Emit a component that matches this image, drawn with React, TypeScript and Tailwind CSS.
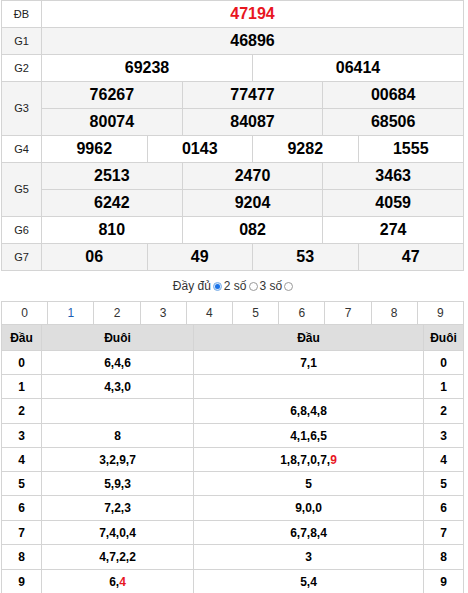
import React from "react";

type Cell = { text: string; span: string; red?: boolean };

const RED = "text-[#e8161f]";

function Label({ text, rows }: { text: string; rows?: number }) {
  return (
    <div
      className={`flex items-center justify-center border-r border-b border-[#d4d4d4] text-[11px] text-[#222] ${rows === 2 ? "row-span-2" : ""}`}
    >
      {text}
    </div>
  );
}

function Val({ c, bg }: { c: Cell; bg: string }) {
  return (
    <div
      className={`flex items-center justify-center border-r border-b border-[#d4d4d4] text-[16px] font-bold ${bg} ${c.span} ${c.red ? RED : "text-black"}`}
    >
      {c.text}
    </div>
  );
}

function Radio({ on }: { on?: boolean }) {
  return on ? (
    <span className="mx-[2px] inline-flex h-[9px] w-[9px] items-center justify-center rounded-full border border-[#7aaee8] bg-[#cfe3fa]">
      <span className="h-[5px] w-[5px] rounded-full bg-[#1a73e8]" />
    </span>
  ) : (
    <span className="mx-[2px] inline-block h-[9px] w-[9px] rounded-full border border-[#9a9a9a] bg-white" />
  );
}

const rows = [
  { d: "0", t: [["6,4,6"]], h: [["7,1"]], hgt: "h-[24px]" },
  { d: "1", t: [["4,3,0"]], h: [[""]], hgt: "h-[24px]" },
  { d: "2", t: [[""]], h: [["6,8,4,8"]], hgt: "h-[25px]" },
  { d: "3", t: [["8"]], h: [["4,1,6,5"]], hgt: "h-[24px]" },
  { d: "4", t: [["3,2,9,7"]], h: [["1,8,7,0,7,"], ["9", "r"]], hgt: "h-[24px]" },
  { d: "5", t: [["5,9,3"]], h: [["5"]], hgt: "h-[24px]" },
  { d: "6", t: [["7,2,3"]], h: [["9,0,0"]], hgt: "h-[25px]" },
  { d: "7", t: [["7,4,0,4"]], h: [["6,7,8,4"]], hgt: "h-[24px]" },
  { d: "8", t: [["4,7,2,2"]], h: [["3"]], hgt: "h-[25px]" },
  { d: "9", t: [["6,"], ["4", "r"]], h: [["5,4"]], hgt: "h-[24px]" },
];

function Parts({ p }: { p: string[][] }) {
  return (
    <>
      {p.map((x, i) => (
        <span key={i} className={x[1] === "r" ? RED : ""}>
          {x[0]}
        </span>
      ))}
    </>
  );
}

export default function App() {
  const W = "bg-white";
  const G = "bg-[#f4f4f4]";
  return (
    <div className="min-h-[593px] w-[468px] bg-white font-['Liberation_Sans',Arial,sans-serif]">
      {/* prize table */}
      <div className="ml-px grid w-[463px] grid-cols-[40px_repeat(12,minmax(0,1fr))] auto-rows-[27px] border-l border-t border-[#d4d4d4]">
        <div className={`contents`}>
          <div className={`${W} contents`} />
        </div>
        <div className="flex items-center justify-center border-r border-b border-[#d4d4d4] bg-white text-[11px] text-[#222]">ĐB</div>
        <Val c={{ text: "47194", span: "col-span-12", red: true }} bg={W} />

        <div className="flex items-center justify-center border-r border-b border-[#d4d4d4] bg-[#f4f4f4] text-[11px] text-[#222]">G1</div>
        <Val c={{ text: "46896", span: "col-span-12" }} bg={G} />

        <div className="flex items-center justify-center border-r border-b border-[#d4d4d4] bg-white text-[11px] text-[#222]">G2</div>
        <Val c={{ text: "69238", span: "col-span-6" }} bg={W} />
        <Val c={{ text: "06414", span: "col-span-6" }} bg={W} />

        <div className="row-span-2 flex items-center justify-center border-r border-b border-[#d4d4d4] bg-[#f4f4f4] text-[11px] text-[#222]">G3</div>
        {["76267", "77477", "00684", "80074", "84087", "68506"].map((t) => (
          <Val key={t} c={{ text: t, span: "col-span-4" }} bg={G} />
        ))}

        <div className="flex items-center justify-center border-r border-b border-[#d4d4d4] bg-white text-[11px] text-[#222]">G4</div>
        {["9962", "0143", "9282", "1555"].map((t) => (
          <Val key={t} c={{ text: t, span: "col-span-3" }} bg={W} />
        ))}

        <div className="row-span-2 flex items-center justify-center border-r border-b border-[#d4d4d4] bg-[#f4f4f4] text-[11px] text-[#222]">G5</div>
        {["2513", "2470", "3463", "6242", "9204", "4059"].map((t) => (
          <Val key={t} c={{ text: t, span: "col-span-4" }} bg={G} />
        ))}

        <div className="flex items-center justify-center border-r border-b border-[#d4d4d4] bg-white text-[11px] text-[#222]">G6</div>
        {["810", "082", "274"].map((t) => (
          <Val key={t} c={{ text: t, span: "col-span-4" }} bg={W} />
        ))}

        <div className="flex items-center justify-center border-r border-b border-[#d4d4d4] bg-[#f4f4f4] text-[11px] text-[#222]">G7</div>
        {["06", "49", "53", "47"].map((t) => (
          <Val key={t} c={{ text: t, span: "col-span-3" }} bg={G} />
        ))}
      </div>

      {/* radio line */}
      <div className="flex h-[30px] items-center justify-center text-[12px] text-[#333]">
        <span>Đầy đủ</span>
        <Radio on />
        <span>2 số</span>
        <Radio />
        <span>3 số</span>
        <Radio />
      </div>

      {/* loto table */}
      <div className="ml-px w-[463px] border-l border-t border-[#d4d4d4]">
        <div className="grid h-[23px] grid-cols-10">
          {["0", "1", "2", "3", "4", "5", "6", "7", "8", "9"].map((d) => (
            <div
              key={d}
              className={`flex items-center justify-center border-r border-b border-[#d4d4d4] text-[12px] ${d === "1" ? "text-[#1e5fb4]" : "text-[#333]"}`}
            >
              {d}
            </div>
          ))}
        </div>
        <div className="grid h-[26px] grid-cols-[40px_152px_230px_40px] bg-[#dedede] text-[12px] font-bold text-black">
          <div className="flex items-center justify-center border-r border-b border-[#d4d4d4]">Đầu</div>
          <div className="flex items-center justify-center border-r border-b border-[#d4d4d4]">Đuôi</div>
          <div className="flex items-center justify-center border-r border-b border-[#d4d4d4]">Đầu</div>
          <div className="flex items-center justify-center border-r border-b border-[#d4d4d4]">Đuôi</div>
        </div>
        {rows.map((r) => (
          <div
            key={r.d}
            className={`grid ${r.hgt} grid-cols-[40px_152px_230px_40px] text-[12px] font-bold text-black`}
          >
            <div className="flex items-center justify-center border-r border-b border-[#d4d4d4]">{r.d}</div>
            <div className="flex items-center justify-center border-r border-b border-[#d4d4d4]">
              <Parts p={r.t} />
            </div>
            <div className="flex items-center justify-center border-r border-b border-[#d4d4d4]">
              <Parts p={r.h} />
            </div>
            <div className="flex items-center justify-center border-r border-b border-[#d4d4d4]">{r.d}</div>
          </div>
        ))}
      </div>
    </div>
  );
}
